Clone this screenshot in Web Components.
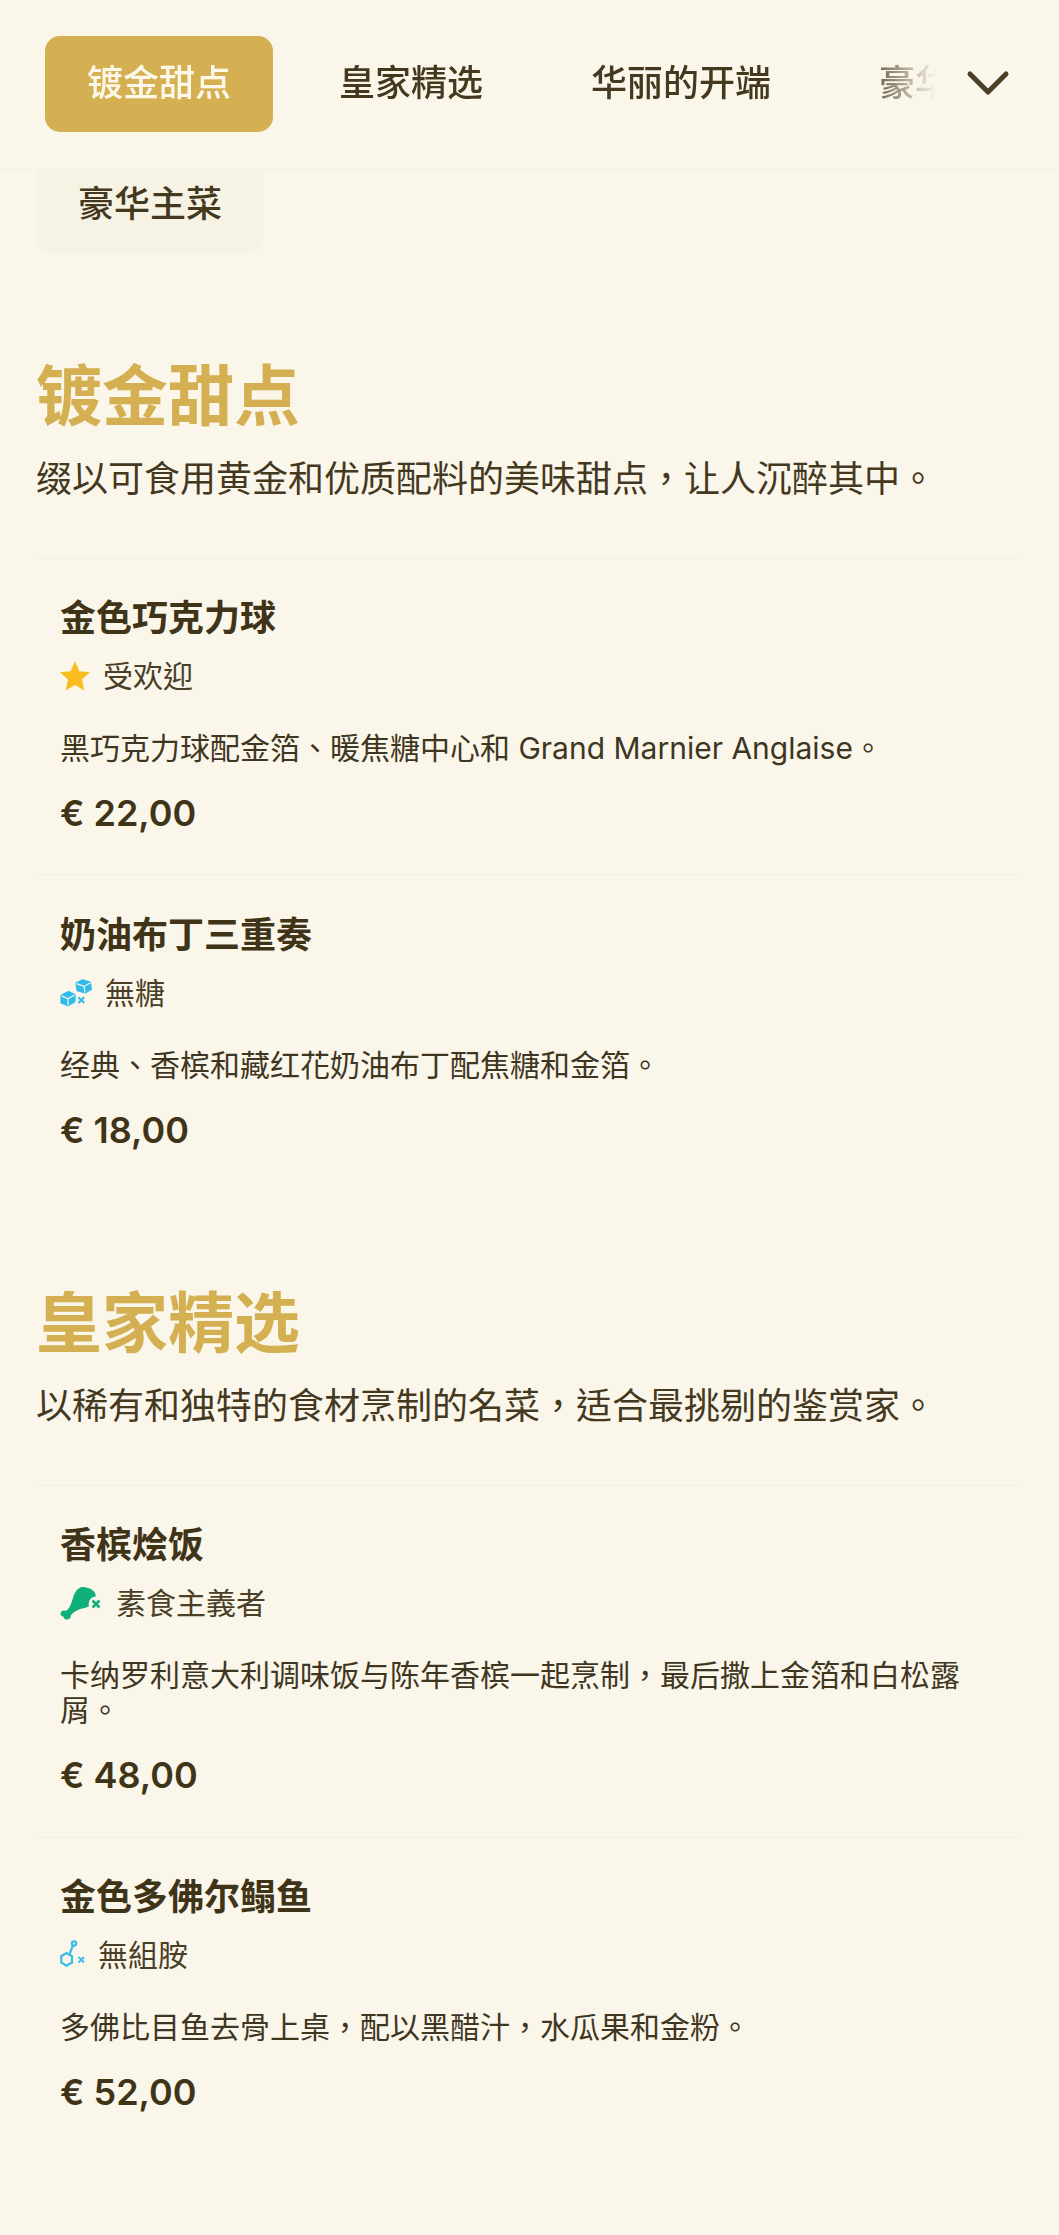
<!DOCTYPE html>
<html lang="zh-Hant">
<head>
<meta charset="utf-8">
<title>菜单</title>
<style>
  html, body { margin: 0; background: #fbf6ea; }
  body {
    font-family: "Inter", "Noto Sans CJK TC", sans-serif;
    color: #44391f;
  }
</style>
</head>
<body>

<menu-header>
  <menu-tab active>镀金甜点</menu-tab>
  <menu-tab>皇家精选</menu-tab>
  <menu-tab>华丽的开端</menu-tab>
  <menu-tab>豪华主菜</menu-tab>
</menu-header>

<wrapped-tabs>
  <menu-tab soft>豪华主菜</menu-tab>
</wrapped-tabs>

<menu-section heading="镀金甜点" intro="缀以可食用黄金和优质配料的美味甜点，让人沉醉其中。">
  <menu-item name="金色巧克力球" price="€ 22,00" tag="受欢迎" icon="star">黑巧克力球配金箔、暖焦糖中心和 Grand Marnier Anglaise。</menu-item>
  <menu-item name="奶油布丁三重奏" price="€ 18,00" tag="無糖" icon="sugar">经典、香槟和藏红花奶油布丁配焦糖和金箔。</menu-item>
</menu-section>

<menu-section heading="皇家精选" intro="以稀有和独特的食材烹制的名菜，适合最挑剔的鉴赏家。">
  <menu-item name="香槟烩饭" price="€ 48,00" tag="素食主義者" icon="meat">卡纳罗利意大利调味饭与陈年香槟一起烹制，最后撒上金箔和白松露屑。</menu-item>
  <menu-item name="金色多佛尔鳎鱼" price="€ 52,00" tag="無組胺" icon="histamine">多佛比目鱼去骨上桌，配以黑醋汁，水瓜果和金粉。</menu-item>
</menu-section>

<script>
class MenuTab extends HTMLElement {
  constructor(){
    super();
    this.attachShadow({mode: "open"});
  }

  connectedCallback() {
    this.shadowRoot.innerHTML = /* html */`
    <style>
      :host {
        display: block;
        flex: none;
        height: 96px;
        padding: 0 42px;
        border-radius: 15px;
        font-size: 36px;
        font-weight: 500;
        line-height: 94px;
        color: #44391f;
      }
      :host([active]) {
        background: #d4b052;
        color: #fdf8ea;
      }
      :host([soft]) {
        background: #f6f3e5;
      }
    </style>
    <slot></slot>
    `
  }
}

class MenuHeader extends HTMLElement {
  constructor(){
    super();
    this.attachShadow({mode: "open"});
  }

  connectedCallback() {
    this.shadowRoot.innerHTML = /* html */`
    <style>
      :host {
        display: flex;
        align-items: flex-start;
        position: relative;
        z-index: 2;
        height: 170px;
        padding: 36px 0 0 45px;
        box-sizing: border-box;
        background: #fbf6ea;
        border-bottom: 2px solid #f7f3e6;
      }
      .scroller {
        display: flex;
        gap: 24px;
        flex: none;
        width: 891px;
        overflow: hidden;
        -webkit-mask-image: linear-gradient(to right, #000 calc(100% - 76px), transparent);
        mask-image: linear-gradient(to right, #000 calc(100% - 76px), transparent);
      }
      .more {
        flex: none;
        margin: 34px 0 0 30px;
        width: 44px;
        height: 28px;
      }
    </style>
    <div class="scroller"><slot></slot></div>
    <svg class="more" viewBox="0 0 44 28" fill="none" stroke="#4a3f25" stroke-width="5" stroke-linecap="round" stroke-linejoin="round">
      <path d="M4 4 L22 22 L40 4"/>
    </svg>
    `
  }
}

class WrappedTabs extends HTMLElement {
  constructor(){
    super();
    this.attachShadow({mode: "open"});
  }

  connectedCallback() {
    this.shadowRoot.innerHTML = /* html */`
    <style>
      :host {
        display: flex;
        margin-top: -13px;
        padding-left: 36px;
      }
    </style>
    <slot></slot>
    `
  }
}

class MenuSection extends HTMLElement {
  constructor(){
    super();
    this.attachShadow({mode: "open"});
  }

  connectedCallback() {
    this.shadowRoot.innerHTML = /* html */`
    <style>
      :host {
        display: block;
        padding: 0 36px;
        margin-top: 92px;
      }
      :host(:first-of-type) {
        margin-top: 103px;
      }
      h2 {
        margin: 0;
        font-size: 66px;
        font-weight: 700;
        line-height: 80px;
        color: #d4b052;
      }
      p {
        margin: 22px 0 57px;
        font-size: 36px;
        font-weight: 400;
        line-height: 42px;
        color: #44391f;
      }
    </style>
    <h2>${this.getAttribute("heading")}</h2>
    <p>${this.getAttribute("intro")}</p>
    <slot></slot>
    `
  }
}

const ICONS = {
  star: /* html */`
    <svg width="30" height="30" viewBox="0 0 30 30">
      <path fill="#f9bd22" d="M15 0 L19.4 10.2 L30 11.3 L22 18.6 L24.3 29.6 L15 24 L5.7 29.6 L8 18.6 L0 11.3 L10.6 10.2 Z"/>
    </svg>`,
  sugar: /* html */`
    <svg width="32" height="28" viewBox="0 0 32 28">
      <g fill="#2fbcec" stroke="#2fbcec" stroke-width="2" stroke-linejoin="round">
        <path d="M22.5 1.2 L30 3.4 L31 10.2 L25 13.6 L17.4 11.2 L16.4 4.4 Z"/>
        <path d="M8.4 13 L14.8 15.8 L14.4 22.6 L7.8 26.4 L1.4 23.6 L1.4 16.6 Z"/>
      </g>
      <g fill="none" stroke="#fbf6ea" stroke-width="1.2">
        <path d="M16.4 4.6 L24 7.4 L30.4 3.8 M24 7.4 L25 13.4"/>
        <path d="M1.4 16.8 L8 19.8 L14.6 16 M8 19.8 V26.2"/>
      </g>
      <path fill="none" stroke="#2fbcec" stroke-width="2" d="M18.4 18.2 L24.2 24 M24.2 18.2 L18.4 24"/>
    </svg>`,
  meat: /* html */`
    <svg width="43" height="34" viewBox="0 0 43 34">
      <path fill="#10b07a" d="M22 1 C27 1 33 3 35 7 C37 11 35 16 31 19 C28 22 22 22 18 24 C15 25 13 27 11 29 C11 32 9 34 6 33.5 C4 33 3.5 31.5 3.5 30.5 C1.5 30.5 0 28.5 .8 26.5 C1.6 24.6 4 24.2 6 25 C10 22 11.5 17 13 12 C14.5 7 17 2 22 1 Z"/>
      <circle cx="36" cy="18" r="7.5" fill="#fbf6ea"/>
      <path fill="none" stroke="#10b07a" stroke-width="2.6" d="M32.5 14.5 L39.5 21.5 M39.5 14.5 L32.5 21.5"/>
    </svg>`,
  histamine: /* html */`
    <svg width="25" height="30" viewBox="0 0 25 30" fill="none" stroke="#3bbde6" stroke-width="2.2">
      <path d="M6.5 13 L12 16.2 L12 22.5 L6.5 25.7 L1.2 22.5 L1.2 16.2 Z"/>
      <path d="M9.5 14.5 L13 5"/>
      <circle cx="14" cy="3.5" r="2.2"/>
      <path d="M18.5 17 L24 22.5 M24 17 L18.5 22.5" stroke-width="1.8"/>
    </svg>`
};

class DietTag extends HTMLElement {
  constructor(){
    super();
    this.attachShadow({mode: "open"});
  }

  connectedCallback() {
    this.shadowRoot.innerHTML = /* html */`
    <style>
      :host {
        display: flex;
        align-items: center;
        gap: 13px;
        height: 40px;
        font-size: 30px;
        line-height: 40px;
        color: #4a3f26;
      }
      svg { display: block; flex: none; }
    </style>
    ${ICONS[this.getAttribute("icon")]}
    <slot></slot>
    `
  }
}

class MenuItem extends HTMLElement {
  constructor(){
    super();
    this.attachShadow({mode: "open"});
  }

  connectedCallback() {
    this.shadowRoot.innerHTML = /* html */`
    <style>
      :host {
        display: block;
        padding: 37px 24px 39px;
        border-top: 2px solid #f6f2e4;
      }
      .name {
        font-size: 36px;
        font-weight: 600;
        line-height: 44px;
        color: #3f3417;
      }
      diet-tag {
        margin-top: 16px;
      }
      .desc {
        margin-top: 35px;
        font-size: 30px;
        line-height: 35px;
        color: #3f3622;
      }
      .price {
        margin-top: 25px;
        font-size: 36px;
        font-weight: 600;
        line-height: 44px;
        color: #3f3417;
      }
    </style>
    <div class="name">${this.getAttribute("name")}</div>
    <diet-tag icon="${this.getAttribute("icon")}">${this.getAttribute("tag")}</diet-tag>
    <div class="desc"><slot></slot></div>
    <div class="price">${this.getAttribute("price")}</div>
    `
  }
}

customElements.define('menu-tab', MenuTab);
customElements.define('menu-header', MenuHeader);
customElements.define('wrapped-tabs', WrappedTabs);
customElements.define('diet-tag', DietTag);
customElements.define('menu-item', MenuItem);
customElements.define('menu-section', MenuSection);
</script>
</body>
</html>
